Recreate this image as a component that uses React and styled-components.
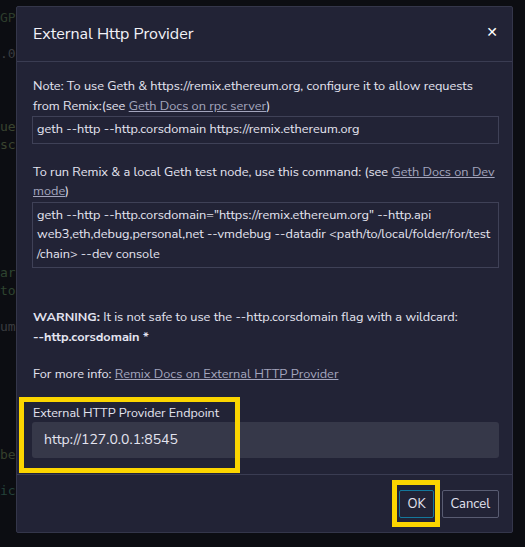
import React from "react";
import styled, { createGlobalStyle } from "styled-components";

const GlobalStyle = createGlobalStyle`
  html, body {
    margin: 0;
    padding: 0;
    background: #0c0d12;
  }
  body {
    font-family: "Nunito Sans", Lato, "Noto Sans", sans-serif;
  }
`;

const Page = styled.div`
  position: relative;
  width: 525px;
  height: 547px;
  overflow: hidden;
  background: #0c0d12;
`;

const Editor = styled.div`
  width: 100%;
  height: 100%;
  padding-top: 9px;
  box-sizing: border-box;
  font-family: "DejaVu Sans Mono", monospace;
  font-size: 13px;
  line-height: 18.2px;
  white-space: pre;
`;

const CodeLine = styled.div`
  height: 18.2px;
  color: ${(p) => p.$color || "#2e3b2f"};
`;

const Modal = styled.div`
  position: absolute;
  left: 16px;
  top: 6px;
  width: 497px;
  height: 527px;
  box-sizing: border-box;
  background: #222336;
  border: 1px solid #34364a;
  border-radius: 2px;
  display: flex;
  flex-direction: column;
  color: #e4e4f0;
`;

const Header = styled.div`
  height: 54px;
  flex-shrink: 0;
  display: flex;
  align-items: center;
  justify-content: space-between;
  padding: 0 14px 0 16px;
  border-bottom: 1px solid #3a3c52;
`;

const Title = styled.h5`
  margin: 0;
  font-size: 16px;
  font-weight: 400;
  color: #f2f2f8;
`;

const Close = styled.span`
  font-family: "DejaVu Sans", sans-serif;
  font-weight: 700;
  font-size: 14px;
  color: #ffffff;
  margin-top: -4px;
`;

const Body = styled.div`
  flex: 1;
  padding: 15px 13px 15px 16px;
  font-size: 12.75px;
  line-height: 19.5px;
  white-space: nowrap;
`;

const Para = styled.div`
  margin-top: ${(p) => p.$top || 0}px;
`;

const Link = styled.a`
  color: #a3a5bd;
  text-decoration: underline;
`;

const CodeBox = styled.div`
  border: 1px solid #3f4157;
  padding: 3px 4px;
  margin-left: -1px;
  color: #e4e4f0;
`;

const Strong = styled.b`
  font-weight: 700;
`;

const Label = styled.div`
  margin-top: 18px;
  font-size: 12.5px;
  color: #e4e4f0;
`;

const Input = styled.div`
  height: 36px;
  margin-left: -1px;
  display: flex;
  align-items: center;
  padding: 0 12px;
  background: #363849;
  border-radius: 3px;
  font-size: 14px;
  color: #e4e4f0;
`;

const Footer = styled.div`
  height: 57px;
  flex-shrink: 0;
  display: flex;
  align-items: center;
  justify-content: flex-end;
  gap: 8px;
  padding: 0 13px 0 16px;
  border-top: 1px solid #3a3c52;
`;

const Button = styled.button`
  box-sizing: border-box;
  height: 28px;
  width: ${(p) => (p.$primary ? "35px" : "auto")};
  padding: 0 8px;
  background: transparent;
  border: 1px solid ${(p) => (p.$primary ? "#14779c" : "#595c72")};
  border-radius: 2px;
  font-family: inherit;
  font-size: 13px;
  color: #e4e4f0;
`;

const Marked = styled.div`
  position: relative;
  display: flex;
`;

const Highlight = styled.div`
  position: absolute;
  border: 5px solid #fcd500;
  box-sizing: border-box;
  pointer-events: none;
`;

const ButtonMark = styled(Highlight)`
  left: -7px;
  right: -6px;
  top: -10px;
  bottom: -9px;
`;

const codeLines = [
  { t: "GPL-3.0", c: "#2c3c2c" },
  { t: "" },
  { t: ".0.0", c: "#3a3c40" },
  { t: "" },
  { t: "" },
  { t: "" },
  { t: "uest", c: "#3a4430" },
  { t: "scope", c: "#3a4430" },
  { t: "" },
  { t: "" },
  { t: "" },
  { t: "" },
  { t: "" },
  { t: "" },
  { t: "array", c: "#2e4430" },
  { t: "to", c: "#2e4430" },
  { t: "" },
  { t: "umber", c: "#3a3c40" },
  { t: "" },
  { t: "" },
  { t: "" },
  { t: "" },
  { t: "" },
  { t: "" },
  { t: "be", c: "#36402c" },
  { t: "" },
  { t: "ic", c: "#24423a" },
];

const App = () => {
  return (
    <Page>
      <GlobalStyle />
      <Editor>
        {codeLines.map((l, i) => (
          <CodeLine key={i} $color={l.c}>
            {l.t}
          </CodeLine>
        ))}
      </Editor>
      <Modal>
        <Header>
          <Title>External Http Provider</Title>
          <Close>✕</Close>
        </Header>
        <Body>
          <Para>
            Note: To use Geth &amp; https://remix.ethereum.org, configure it to allow requests
            <br />
            from Remix:(see <Link>Geth Docs on rpc server</Link>)
          </Para>
          <CodeBox>geth --http --http.corsdomain https://remix.ethereum.org</CodeBox>
          <Para $top={19}>
            To run Remix &amp; a local Geth test node, use this command: (see{" "}
            <Link>
              Geth Docs on Dev
              <br />
              mode
            </Link>
            )
          </Para>
          <CodeBox>
            geth --http --http.corsdomain="https://remix.ethereum.org" --http.api
            <br />
            web3,eth,debug,personal,net --vmdebug --datadir &lt;path/to/local/folder/for/test
            <br />
            /chain&gt; --dev console
          </CodeBox>
          <Para $top={40}>
            <Strong>WARNING:</Strong> It is not safe to use the --http.corsdomain flag with a wildcard:
            <br />
            <Strong>--http.corsdomain *</Strong>
          </Para>
          <Para $top={18}>
            For more info: <Link>Remix Docs on External HTTP Provider</Link>
          </Para>
          <Label>External HTTP Provider Endpoint</Label>
          <Input>http://127.0.0.1:8545</Input>
        </Body>
        <Footer>
          <Marked>
            <Button $primary>OK</Button>
            <ButtonMark />
          </Marked>
          <Button>Cancel</Button>
        </Footer>
        <Highlight style={{ left: 2, top: 390, width: 221, height: 76 }} />
      </Modal>
    </Page>
  );
};

export default App;
